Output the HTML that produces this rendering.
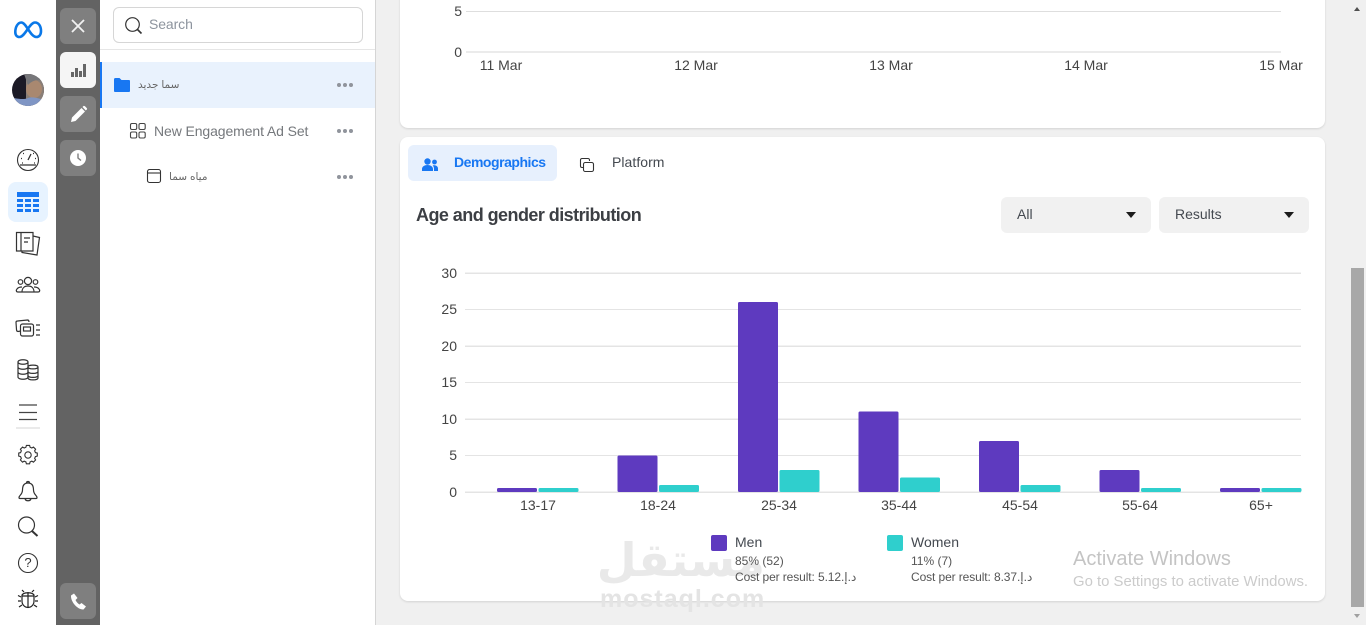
<!DOCTYPE html>
<html><head><meta charset="utf-8"><style>
html,body{margin:0;padding:0;width:1366px;height:625px;overflow:hidden;background:#f0f0f0;font-family:"Liberation Sans","DejaVu Sans",sans-serif;color:#444950}
.a{position:absolute}
.t{position:absolute;white-space:nowrap;line-height:16px}
.btn{position:absolute;left:60px;width:36px;height:36px;border-radius:6px;background:#7f7f7f}
.dots{position:absolute;left:337px;width:16px;height:4px}
.dots i{position:absolute;top:0;width:4px;height:4px;border-radius:50%;background:#90949c}
.dots i:nth-child(1){left:0}.dots i:nth-child(2){left:6px}.dots i:nth-child(3){left:12px}
svg{position:absolute;overflow:visible}
</style></head><body>
<div class="a" style="left:0;top:0;width:56px;height:625px;background:#fff"></div>
<div class="a" style="left:56px;top:0;width:44px;height:625px;background:#636363"></div>
<div class="a" style="left:100px;top:0;width:275px;height:625px;background:#fff"></div>
<div class="a" style="left:375px;top:0;width:1px;height:625px;background:#d5d5d5"></div>

<!-- nav icons -->
<svg style="left:0;top:0" width="56" height="625" fill="none" stroke="#333" stroke-width="1.100">
<path d="M15.300 32c0-5 2.500-9.500 6-9.500 5 0 9 14.500 15 14.500 3 0 4.700-2.500 4.700-6 0-5-2.500-8.500-6-8.500-5.500 0-10 14.500-15.500 14.500-2.700 0-4.200-2-4.200-5z" stroke="#0a78e8" stroke-width="2.600"/>
<rect x="8" y="182" width="40" height="40" rx="8" fill="#e7f3ff" stroke="none"/>
<g fill="#1877f2" stroke="none"><rect x="17" y="192" width="22" height="5"/><rect x="17" y="199" width="6" height="3"/><rect x="25" y="199" width="6" height="3"/><rect x="33" y="199" width="6" height="3"/><rect x="17" y="204" width="6" height="3"/><rect x="25" y="204" width="6" height="3"/><rect x="33" y="204" width="6" height="3"/><rect x="17" y="209" width="6" height="3"/><rect x="25" y="209" width="6" height="3"/><rect x="33" y="209" width="6" height="3"/></g>
<circle cx="28" cy="160" r="10.500"/><path d="M28 160l3-6M21 158.500h1M23 153.500h1M33 153.500h1M35 158.500h1M20 165h16M22 163h1M34 163h1" stroke-width="1.300"/>
<path d="M16.500 232.500h16.500v18.500H16.500z" stroke-width="1.200"/><path d="M21 233v18M24 238h6M24 242h4M33 236l6.500 1.500-2.500 17.500-15-2.500v-1.500" stroke-width="1.200"/>
<circle cx="28" cy="281" r="3.600" stroke-width="1.200"/><circle cx="20.500" cy="282" r="2.300" stroke-width="1.200"/><circle cx="35.500" cy="282" r="2.300" stroke-width="1.200"/><path d="M22 292c0-4 2.500-6 6-6s6 2 6 6zM22 292h-4c-2 0-2-2-1-3 1-1.500 3-2 5-2M34 292h4c2 0 2-2 1-3-1-1.500-3-2-5-2" stroke-width="1.200"/>
<path d="M21 331l-3 .5c-1 0-1.500-1-1.500-2l-.5-7c0-1 .5-1.500 1.500-1.500l10-1c1 0 1.500 .5 1.500 2" stroke-width="1.200"/><rect x="20.500" y="324" width="13" height="12" rx="2" stroke-width="1.200"/><rect x="23.500" y="327" width="7" height="4" stroke-width="1.200"/><path d="M36 325h4M36 330h4M36 335h4" stroke-width="1.200"/>
<path d="M18 362c0-3 10-3 10 0v15c0 3-10 3-10 0zM18 362c0 3 10 3 10 0M18 367c0 3 10 3 10 0M18 372c0 3 10 3 10 0" stroke-width="1.200"/>
<path d="M28 367c0-2.500 10-2.500 10 0v11c0 2.500-10 2.500-10 0zM28 367c0 2.500 10 2.500 10 0M28 371.500c0 2.500 10 2.500 10 0M28 375.500c0 2.500 10 2.500 10 0" fill="#fff" stroke-width="1.200"/>
<path d="M19 405h18M19 412.500h18M19 419.500h18" stroke="#444" stroke-width="1.200"/>
<path d="M16 428h24" stroke="#ddd" stroke-width="1.200"/>
<circle cx="28" cy="455" r="3.200"/><path transform="translate(28 455) scale(.8) translate(-28 -458)" stroke-width="1.400" d="M26 446h4l.6 2.300 2.200 1 2-1.200 2.700 2.700-1.200 2 1 2.200 2.300.6v3.800l-2.300.6-1 2.200 1.200 2-2.700 2.700-2-1.200-2.200 1-.6 2.300h-4l-.6-2.300-2.200-1-2 1.200-2.700-2.700 1.200-2-1-2.200-2.300-.6v-3.800l2.300-.6 1-2.200-1.200-2 2.700-2.700 2 1.200 2.200-1z"/>
<path d="M28 483c-4.500 0-5.500 3.500-5.500 7 0 4.500-3.500 5.500-3.500 7.500 0 .8.500 1 1 1h16c.5 0 1-.2 1-1 0-2-3.500-3-3.500-7.500 0-3.500-1-7-5.500-7zM26.500 483c0-2 3-2 3 0M25 498.500c.5 3 5.500 3 6 0" stroke-width="1.200"/>
<circle cx="26.500" cy="525" r="8" stroke-width="1.200"/><path d="M32 531l5.500 5" stroke-width="2"/>
<circle cx="28" cy="563" r="9.500"/>
<path d="M22 595c2-3 10-3 12 0v6c0 4-3 6.500-6 6.500s-6-2.500-6-6.500zM28 592v15.500M22 596h12M24 592l-2-2M32 592l2-2M21 597l-3-1.500M35 597l3-1.500M21 601h-3M35 601h3M22 605l-3 2M34 605l3 2" stroke="#222" stroke-width="1.200"/>
</svg>
<div class="t" style="left:22px;top:555px;width:12px;text-align:center;font-size:13px;color:#333">?</div>
<svg style="left:12px;top:74px" width="32" height="32"><defs><clipPath id="c"><circle cx="16" cy="16" r="16"/></clipPath></defs><g clip-path="url(#c)"><rect width="32" height="32" fill="#1c1a26"/><path d="M14 0h18v32H14z" fill="#8a7f78"/><ellipse cx="22" cy="15" rx="8" ry="9" fill="#a98870"/><path d="M2 24q10 2 14 0t16 2v6H2z" fill="#7f95c4"/><path d="M12 0h20v7q-10-3-16 4z" fill="#77777a"/></g></svg>

<!-- rail -->
<div class="btn" style="top:8px"><svg style="left:11px;top:11px" width="14" height="14" stroke="#f2f2f2" stroke-width="1.800"><path d="M1 1l12 12M13 1L1 13"/></svg></div>
<div class="btn" style="top:52px;background:#f5f5f5"><svg style="left:11px;top:11px" width="15" height="15" fill="#666"><rect x="0" y="9" width="3" height="5"/><rect x="4" y="5" width="3" height="9"/><rect x="8" y="8" width="3" height="6"/><rect x="12" y="1" width="3" height="13"/></svg></div>
<div class="btn" style="top:96px"><svg style="left:11px;top:10px" width="16" height="16" fill="#fff"><path d="M0 16l1-4.500L10.500 2l3.500 3.500L4.500 15zM11.500 1l1-1c.5-.3 1 0 1.500.3l1.800 1.800c.4.500.4 1 0 1.400l-1 1z"/></svg></div>
<div class="btn" style="top:140px"><svg style="left:10px;top:10px" width="16" height="16"><circle cx="8" cy="8" r="8" fill="#fff"/><path d="M8 3.500V8l3 2.500" stroke="#7f7f7f" stroke-width="1.400" fill="none"/></svg></div>
<div class="btn" style="top:583px"><svg style="left:10px;top:10px" width="17" height="17" fill="#fff"><path d="M1 2.500L4 .5l3.500 4.500-2 2c.7 1.700 2.300 3.500 4 4.500l2-1.500 4.500 3.500-2.500 3C8 17 .5 9 1 2.500z"/></svg></div>

<!-- panel -->
<div class="a" style="left:113px;top:7px;width:248px;height:34px;border:1px solid #d6d6d6;border-radius:6px;background:#fff"></div>
<svg style="left:125px;top:17px" width="18" height="18" fill="none" stroke="#333" stroke-width="1.200"><circle cx="7.500" cy="7.500" r="6.800"/><path d="M12.500 12.500l4 4" stroke-width="1.600"/></svg>
<div class="t" style="left:149px;top:16px;font-size:14px;color:#8d949e;letter-spacing:-.1px">Search</div>
<div class="a" style="left:100px;top:49px;width:275px;height:1px;background:#e6e6e6"></div>
<div class="a" style="left:100px;top:62px;width:275px;height:46px;background:#e9f2fd"></div>
<div class="a" style="left:100px;top:62px;width:2px;height:46px;background:#1877f2"></div>
<svg style="left:114px;top:78px" width="16" height="14" fill="#1877f2"><path d="M0 1.500C0 .5.500 0 1.500 0h4L7.500 2H15c.6 0 1 .4 1 1v10c0 .6-.4 1-1 1H1c-.6 0-1-.4-1-1z"/></svg>
<div class="t" style="left:138px;top:77px;font-size:10.500px;color:#666" dir="rtl">سما جديد</div>
<div class="dots" style="top:83px"><i></i><i></i><i></i></div>
<svg style="left:130px;top:123px" width="16" height="16" fill="none" stroke="#444" stroke-width="1.100"><rect x=".5" y=".5" width="6.200" height="6" rx="1.500"/><rect x="9" y=".5" width="6.200" height="6" rx="1.500"/><rect x=".5" y="9" width="6.200" height="6" rx="1.500"/><rect x="9" y="9" width="6.200" height="6" rx="1.500"/></svg>
<div class="t" style="left:154px;top:123px;font-size:14px;color:#75787c;letter-spacing:-.1px">New Engagement Ad Set</div>
<div class="dots" style="top:129px"><i></i><i></i><i></i></div>
<svg style="left:147px;top:169px" width="15" height="15" fill="none" stroke="#333" stroke-width="1.100"><rect x=".5" y=".5" width="13" height="13" rx="2"/><path d="M.5 4h13"/></svg>
<div class="t" style="left:169px;top:169px;font-size:10.500px;color:#666" dir="rtl">مياه سما</div>
<div class="dots" style="top:175px"><i></i><i></i><i></i></div>

<!-- cards -->
<div class="a" style="left:400px;top:-10px;width:925px;height:138px;background:#fff;border-radius:8px;box-shadow:0 1px 2px rgba(0,0,0,.12)"></div>
<div class="a" style="left:400px;top:137px;width:925px;height:464px;background:#fff;border-radius:8px;box-shadow:0 1px 2px rgba(0,0,0,.12)"></div>

<!-- top chart -->
<div class="a" style="left:466px;top:11px;width:815px;height:1px;background:#dedede"></div>
<div class="a" style="left:466px;top:51px;width:815px;height:2px;background:#ebebeb"></div>
<div class="t" style="left:432px;top:3px;width:30px;text-align:right;font-size:14px;color:#444">5</div>
<div class="t" style="left:432px;top:44px;width:30px;text-align:right;font-size:14px;color:#444">0</div>
<div class="t" style="left:461px;top:57px;width:80px;text-align:center;font-size:14px;color:#444">11 Mar</div>
<div class="t" style="left:656px;top:57px;width:80px;text-align:center;font-size:14px;color:#444">12 Mar</div>
<div class="t" style="left:851px;top:57px;width:80px;text-align:center;font-size:14px;color:#444">13 Mar</div>
<div class="t" style="left:1046px;top:57px;width:80px;text-align:center;font-size:14px;color:#444">14 Mar</div>
<div class="t" style="left:1241px;top:57px;width:80px;text-align:center;font-size:14px;color:#444">15 Mar</div>

<!-- tabs -->
<div class="a" style="left:408px;top:145px;width:149px;height:36px;background:#e7f0fd;border-radius:6px"></div>
<svg style="left:422px;top:158px" width="16" height="13" fill="#1877f2"><circle cx="5.500" cy="3.500" r="3.200"/><circle cx="12.500" cy="4" r="2.400"/><path d="M0 13V11c0-2.500 2.500-4 5.500-4S11 8.500 11 11v2zM12 13v-2c0-1.500-.5-2.700-1.300-3.600C13.500 6.800 16 8 16 10.500V13z"/></svg>
<div class="t" style="left:454px;top:154px;font-size:14px;font-weight:bold;color:#1877f2;letter-spacing:-.47px">Demographics</div>
<svg style="left:580px;top:158px" width="14" height="14" fill="none" stroke="#333" stroke-width="1.100"><path d="M3 9.500H2c-.8 0-1.500-.6-1.500-1.500V2C.5 1.200 1.200.5 2 .5h6c.8 0 1.500.7 1.500 1.500v1"/><rect x="3.500" y="4.500" width="10" height="9" rx="1.800" fill="#fff"/></svg>
<div class="t" style="left:612px;top:154px;font-size:14px;color:#444950;letter-spacing:.05px">Platform</div>

<div class="t" style="left:416px;top:207px;font-size:18px;font-weight:bold;color:#3c3f44;letter-spacing:-.55px">Age and gender distribution</div>

<div class="a" style="left:1001px;top:197px;width:150px;height:36px;background:#f1f1f1;border-radius:6px"></div>
<div class="t" style="left:1017px;top:206px;font-size:14px;color:#444950">All</div>
<div class="a" style="left:1126px;top:212px;width:0;height:0;border-left:5.500px solid transparent;border-right:5.500px solid transparent;border-top:6px solid #1c1c1c"></div>
<div class="a" style="left:1159px;top:197px;width:150px;height:36px;background:#f1f1f1;border-radius:6px"></div>
<div class="t" style="left:1175px;top:206px;font-size:14px;color:#444950">Results</div>
<div class="a" style="left:1284px;top:212px;width:0;height:0;border-left:5.500px solid transparent;border-right:5.500px solid transparent;border-top:6px solid #1c1c1c"></div>

<!-- chart -->
<svg style="left:0;top:0" width="1366" height="625">
<g fill="#e4e4e4"><rect x="465" y="272.500" width="836" height="1.500"/><rect x="465" y="309" width="836" height="1"/><rect x="465" y="345.500" width="836" height="1.500"/><rect x="465" y="382" width="836" height="1"/><rect x="465" y="418.500" width="836" height="1.500"/><rect x="465" y="455" width="836" height="1"/><rect x="465" y="491.500" width="836" height="1.500"/></g>
<g fill="#5e3abf">
<rect x="497" y="488" width="40" height="4" rx="1.500"/><rect x="617.500" y="455.500" width="40" height="36.500" rx="1.500"/><rect x="738" y="302" width="40" height="190" rx="1.500"/><rect x="858.500" y="411.500" width="40" height="80.500" rx="1.500"/><rect x="979" y="441" width="40" height="51" rx="1.500"/><rect x="1099.500" y="470" width="40" height="22" rx="1.500"/><rect x="1220" y="488" width="40" height="4" rx="1.500"/>
</g>
<g fill="#2fcfcd">
<rect x="538.500" y="488" width="40" height="4" rx="1.500"/><rect x="659" y="485" width="40" height="7" rx="1.500"/><rect x="779.500" y="470" width="40" height="22" rx="1.500"/><rect x="900" y="477.500" width="40" height="14.500" rx="1.500"/><rect x="1020.500" y="485" width="40" height="7" rx="1.500"/><rect x="1141" y="488" width="40" height="4" rx="1.500"/><rect x="1261.500" y="488" width="40" height="4" rx="1.500"/>
</g>
</svg>
<div class="t" style="left:427px;top:265px;width:30px;text-align:right;font-size:14px;color:#444">30</div>
<div class="t" style="left:427px;top:301px;width:30px;text-align:right;font-size:14px;color:#444">25</div>
<div class="t" style="left:427px;top:338px;width:30px;text-align:right;font-size:14px;color:#444">20</div>
<div class="t" style="left:427px;top:374px;width:30px;text-align:right;font-size:14px;color:#444">15</div>
<div class="t" style="left:427px;top:411px;width:30px;text-align:right;font-size:14px;color:#444">10</div>
<div class="t" style="left:427px;top:447px;width:30px;text-align:right;font-size:14px;color:#444">5</div>
<div class="t" style="left:427px;top:484px;width:30px;text-align:right;font-size:14px;color:#444">0</div>
<div class="t" style="left:498px;top:497px;width:80px;text-align:center;font-size:14px;color:#444">13-17</div>
<div class="t" style="left:618px;top:497px;width:80px;text-align:center;font-size:14px;color:#444">18-24</div>
<div class="t" style="left:739px;top:497px;width:80px;text-align:center;font-size:14px;color:#444">25-34</div>
<div class="t" style="left:859px;top:497px;width:80px;text-align:center;font-size:14px;color:#444">35-44</div>
<div class="t" style="left:980px;top:497px;width:80px;text-align:center;font-size:14px;color:#444">45-54</div>
<div class="t" style="left:1100px;top:497px;width:80px;text-align:center;font-size:14px;color:#444">55-64</div>
<div class="t" style="left:1221px;top:497px;width:80px;text-align:center;font-size:14px;color:#444">65+</div>

<!-- watermark -->
<div class="t" style="left:600px;top:530px;width:165px;height:60px;line-height:60px;text-align:center;font-family:'DejaVu Sans',sans-serif;font-weight:bold;font-size:46px;color:#e9e9e9" dir="rtl">مستقل</div>
<div class="t" style="left:600px;top:586px;font-size:25px;line-height:26px;font-weight:bold;color:#e4e4e4;letter-spacing:1px">mostaql.com</div>

<!-- legend -->
<div class="a" style="left:711px;top:535px;width:16px;height:16px;border-radius:2px;background:#5e3abf"></div>
<div class="t" style="left:735px;top:534px;font-size:14px;color:#444950">Men</div>
<div class="t" style="left:735px;top:553px;font-size:12px;color:#555">85% (52)</div>
<div class="t" style="left:735px;top:569px;font-size:12px;color:#555;letter-spacing:-.1px">Cost per result: 5.12د.إ.‏</div>
<div class="a" style="left:887px;top:535px;width:16px;height:16px;border-radius:2px;background:#2fcfcd"></div>
<div class="t" style="left:911px;top:534px;font-size:14px;color:#444950">Women</div>
<div class="t" style="left:911px;top:553px;font-size:12px;color:#555">11% (7)</div>
<div class="t" style="left:911px;top:569px;font-size:12px;color:#555;letter-spacing:-.1px">Cost per result: 8.37د.إ.‏</div>

<!-- activate windows -->
<div class="t" style="left:1073px;top:547px;font-size:20px;line-height:24px;color:#c4c4c4">Activate Windows</div>
<div class="t" style="left:1073px;top:573px;font-size:14.900px;line-height:18px;color:#cbcbcb">Go to Settings to activate Windows.</div>

<!-- scrollbar -->
<div class="a" style="left:1351px;top:268px;width:13px;height:339px;background:#a8a8a8"></div>
<div class="a" style="left:1354px;top:7px;width:0;height:0;border-left:3.500px solid transparent;border-right:3.500px solid transparent;border-bottom:4px solid #505050"></div>
<div class="a" style="left:1354px;top:614px;width:0;height:0;border-left:3.500px solid transparent;border-right:3.500px solid transparent;border-top:4px solid #a0a0a0"></div>
</body></html>
